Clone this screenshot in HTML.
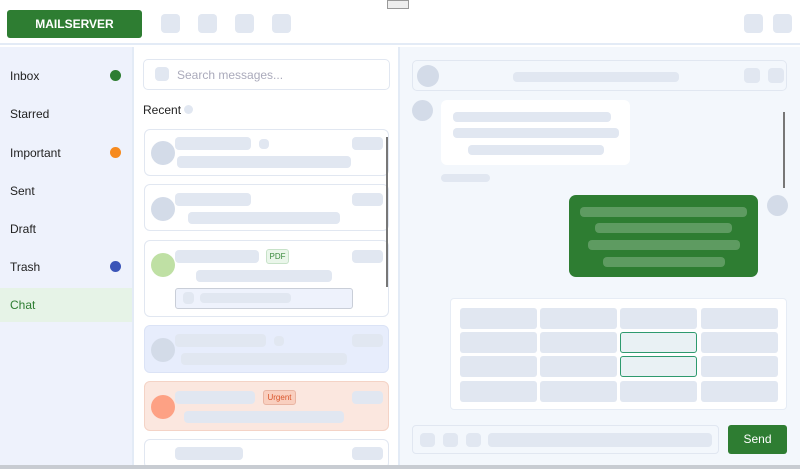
<!DOCTYPE html><html><head><style>
*{margin:0;padding:0;box-sizing:border-box}
body{width:800px;height:469px;overflow:hidden;background:#fff;font-family:"Liberation Sans",sans-serif;position:relative}
.a{position:absolute}
.g{background:#e1e7f1;border-radius:4px}
.t{font-size:12px;color:#222}
.dot{width:11px;height:11px;border-radius:50%}
.card{position:absolute;left:144px;width:245px;border:1px solid #e1e7f1;border-radius:6px;background:#fff}
.cell{position:absolute;width:77px;height:21px;background:#e1e7f1;border-radius:3px}
</style></head><body>
<div class="a" style="left:0;top:0;width:800px;height:45px;background:#fff;border-bottom:2px solid #e3ebf6"></div>
<div class="a" style="left:7px;top:10px;width:135px;height:28px;background:#2e7d32;border-radius:3px;color:#fff;font-weight:bold;font-size:12px;text-align:center;line-height:28px">MAILSERVER</div>
<div class="a g" style="left:161px;top:14px;width:19px;height:19px"></div>
<div class="a g" style="left:198px;top:14px;width:19px;height:19px"></div>
<div class="a g" style="left:235px;top:14px;width:19px;height:19px"></div>
<div class="a g" style="left:272px;top:14px;width:19px;height:19px"></div>
<div class="a g" style="left:744px;top:14px;width:19px;height:19px"></div>
<div class="a g" style="left:773px;top:14px;width:19px;height:19px"></div>
<div class="a" style="left:387px;top:0;width:22px;height:9px;border:1px solid #999;background:#eee"></div>
<!-- sidebar -->
<div class="a" style="left:0;top:47px;width:134px;height:420px;background:#eef2fc;border-right:2px solid #e3ebf6"></div>
<div class="a" style="left:0;top:288px;width:132px;height:34px;background:#e6f3e7"></div>
<div class="a t" style="left:10px;top:69px">Inbox</div><div class="a dot" style="left:110px;top:70px;background:#2e7d32"></div>
<div class="a t" style="left:10px;top:107px">Starred</div>
<div class="a t" style="left:10px;top:146px">Important</div><div class="a dot" style="left:110px;top:147px;background:#f68a1e"></div>
<div class="a t" style="left:10px;top:184px">Sent</div>
<div class="a t" style="left:10px;top:222px">Draft</div>
<div class="a t" style="left:10px;top:260px">Trash</div><div class="a dot" style="left:110px;top:261px;background:#3b55b8"></div>
<div class="a t" style="left:10px;top:298px;color:#2e7d32">Chat</div>
<!-- middle -->
<div class="a" style="left:143px;top:59px;width:247px;height:31px;border:1px solid #e1e7f1;border-radius:5px"></div>
<div class="a g" style="left:155px;top:67px;width:14px;height:14px"></div>
<div class="a" style="left:177px;top:68px;font-size:12px;color:#aab">Search messages...</div>
<div class="a t" style="left:143px;top:103px">Recent</div>
<div class="a g" style="left:184px;top:105px;width:9px;height:9px;border-radius:50%"></div>
<div class="card" style="top:129px;height:47px"></div>
<div class="a" style="left:151px;top:141px;width:24px;height:24px;border-radius:50%;background:#d3dbe8"></div>
<div class="a g" style="left:175px;top:137px;width:76px;height:13px"></div>
<div class="a g" style="left:259px;top:139px;width:10px;height:10px"></div>
<div class="a g" style="left:352px;top:137px;width:31px;height:13px"></div>
<div class="a g" style="left:177px;top:156px;width:174px;height:12px"></div>
<div class="card" style="top:184px;height:47px"></div>
<div class="a" style="left:151px;top:197px;width:24px;height:24px;border-radius:50%;background:#d3dbe8"></div>
<div class="a g" style="left:175px;top:193px;width:76px;height:13px"></div>
<div class="a g" style="left:352px;top:193px;width:31px;height:13px"></div>
<div class="a g" style="left:188px;top:212px;width:152px;height:12px"></div>
<div class="card" style="top:240px;height:77px"></div>
<div class="a" style="left:151px;top:253px;width:24px;height:24px;border-radius:50%;background:#bfe0a4"></div>
<div class="a g" style="left:175px;top:250px;width:84px;height:13px"></div>
<div class="a" style="left:266px;top:249px;width:23px;height:15px;background:#eaf6ea;border:1px solid #c7e2c8;border-radius:3px;font-size:8px;color:#3a8a3e;text-align:center;line-height:13px">PDF</div>
<div class="a g" style="left:352px;top:250px;width:31px;height:13px"></div>
<div class="a g" style="left:196px;top:270px;width:136px;height:12px"></div>
<div class="a" style="left:175px;top:288px;width:178px;height:21px;background:#eef2fc;border:1px solid #c9ced8;border-radius:3px"></div>
<div class="a g" style="left:183px;top:292px;width:11px;height:12px"></div>
<div class="a g" style="left:200px;top:293px;width:91px;height:10px"></div>
<div class="a" style="left:144px;top:325px;width:245px;height:48px;background:#e7edfc;border:1px solid #dbe3f6;border-radius:6px"></div>
<div class="a" style="left:151px;top:338px;width:24px;height:24px;border-radius:50%;background:#d3dbe8"></div>
<div class="a g" style="left:175px;top:334px;width:91px;height:13px"></div>
<div class="a g" style="left:274px;top:336px;width:10px;height:10px"></div>
<div class="a g" style="left:352px;top:334px;width:31px;height:13px"></div>
<div class="a g" style="left:181px;top:353px;width:166px;height:12px"></div>
<div class="a" style="left:144px;top:381px;width:245px;height:50px;background:#fbe7df;border:1px solid #f4d3c6;border-radius:6px"></div>
<div class="a" style="left:151px;top:395px;width:24px;height:24px;border-radius:50%;background:#fda184"></div>
<div class="a g" style="left:175px;top:391px;width:80px;height:13px"></div>
<div class="a" style="left:263px;top:390px;width:33px;height:15px;background:#f9cfbf;border:1px solid #e9b5a3;border-radius:3px;font-size:8px;color:#d9552b;text-align:center;line-height:13px">Urgent</div>
<div class="a g" style="left:352px;top:391px;width:31px;height:13px"></div>
<div class="a g" style="left:184px;top:411px;width:160px;height:12px"></div>
<div class="card" style="top:439px;height:30px"></div>
<div class="a g" style="left:175px;top:447px;width:68px;height:13px"></div>
<div class="a g" style="left:352px;top:447px;width:31px;height:13px"></div>
<div class="a" style="left:386px;top:137px;width:2px;height:150px;background:#777"></div>
<!-- right -->
<div class="a" style="left:398px;top:47px;width:402px;height:420px;background:#f3f7fc;border-left:2px solid #e3ebf6"></div>
<div class="a" style="left:412px;top:60px;width:375px;height:31px;border:1px solid #e1e7f1;border-radius:5px;background:#f3f7fc"></div>
<div class="a" style="left:417px;top:65px;width:22px;height:22px;border-radius:50%;background:#d3dbe8"></div>
<div class="a g" style="left:513px;top:72px;width:166px;height:10px"></div>
<div class="a g" style="left:744px;top:68px;width:16px;height:15px"></div>
<div class="a g" style="left:768px;top:68px;width:16px;height:15px"></div>
<div class="a" style="left:412px;top:100px;width:21px;height:21px;border-radius:50%;background:#d3dbe8"></div>
<div class="a" style="left:441px;top:100px;width:189px;height:65px;background:#fff;border-radius:6px"></div>
<div class="a g" style="left:453px;top:112px;width:158px;height:10px"></div>
<div class="a g" style="left:453px;top:128px;width:166px;height:10px"></div>
<div class="a g" style="left:468px;top:145px;width:136px;height:10px"></div>
<div class="a g" style="left:441px;top:174px;width:49px;height:8px"></div>
<div class="a" style="left:569px;top:195px;width:189px;height:82px;background:#2e7d32;border-radius:7px"></div>
<div class="a" style="left:580px;top:207px;width:167px;height:10px;background:#5e9b61;border-radius:4px"></div>
<div class="a" style="left:595px;top:223px;width:137px;height:10px;background:#5e9b61;border-radius:4px"></div>
<div class="a" style="left:588px;top:240px;width:152px;height:10px;background:#5e9b61;border-radius:4px"></div>
<div class="a" style="left:603px;top:257px;width:122px;height:10px;background:#5e9b61;border-radius:4px"></div>
<div class="a" style="left:767px;top:195px;width:21px;height:21px;border-radius:50%;background:#d3dbe8"></div>
<div class="a" style="left:783px;top:112px;width:2px;height:76px;background:#777"></div>
<div class="a" style="left:450px;top:298px;width:337px;height:112px;background:#fff;border:1px solid #e6ecf5;border-radius:4px"></div>
<div class="cell" style="left:460px;top:308px"></div><div class="cell" style="left:540px;top:308px"></div><div class="cell" style="left:620px;top:308px"></div><div class="cell" style="left:701px;top:308px"></div>
<div class="cell" style="left:460px;top:332px"></div><div class="cell" style="left:540px;top:332px"></div><div class="cell" style="left:620px;top:332px;background:#e9f1f4;border:1px solid #2e9a6e"></div><div class="cell" style="left:701px;top:332px"></div>
<div class="cell" style="left:460px;top:356px"></div><div class="cell" style="left:540px;top:356px"></div><div class="cell" style="left:620px;top:356px;background:#e9f1f4;border:1px solid #2e9a6e"></div><div class="cell" style="left:701px;top:356px"></div>
<div class="cell" style="left:460px;top:381px"></div><div class="cell" style="left:540px;top:381px"></div><div class="cell" style="left:620px;top:381px"></div><div class="cell" style="left:701px;top:381px"></div>
<div class="a" style="left:412px;top:425px;width:307px;height:29px;border:1px solid #e1e7f1;border-radius:4px"></div>
<div class="a g" style="left:420px;top:433px;width:15px;height:14px"></div>
<div class="a g" style="left:443px;top:433px;width:15px;height:14px"></div>
<div class="a g" style="left:466px;top:433px;width:15px;height:14px"></div>
<div class="a g" style="left:488px;top:433px;width:224px;height:14px"></div>
<div class="a" style="left:728px;top:425px;width:59px;height:29px;background:#2e7d32;border-radius:3px;color:#fff;font-size:12px;text-align:center;line-height:29px">Send</div>
<div class="a" style="left:0;top:465px;width:800px;height:4px;background:#c8ccd2"></div>
</body></html>
